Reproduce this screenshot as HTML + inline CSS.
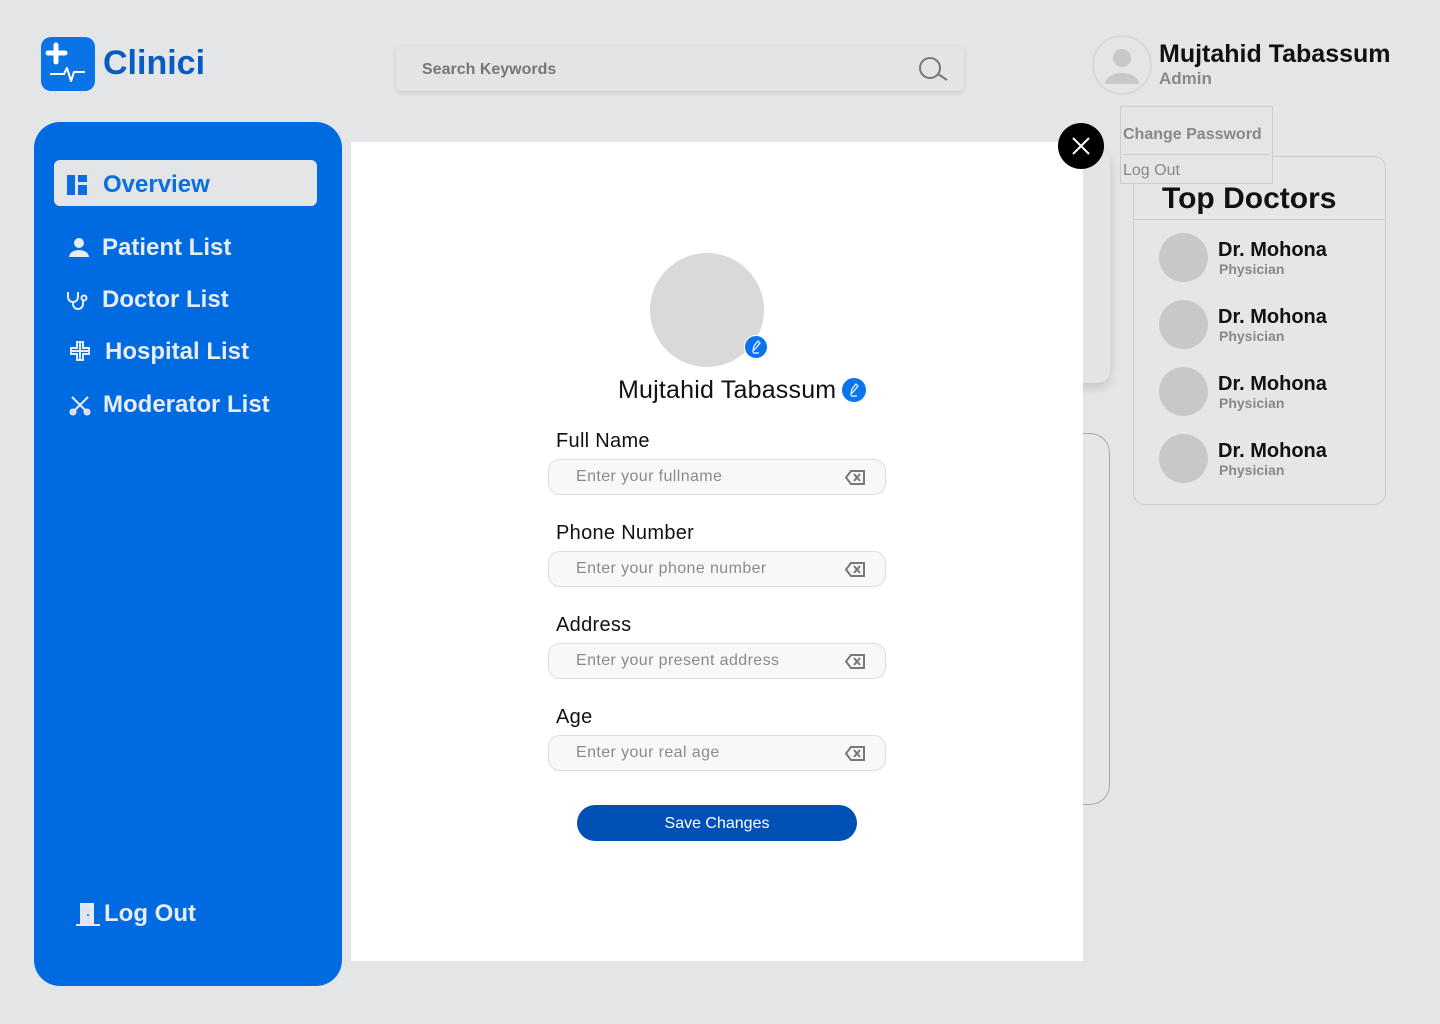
<!DOCTYPE html>
<html><head><meta charset="utf-8"><style>
*{box-sizing:border-box;margin:0;padding:0}
body{width:1440px;height:1024px;background:#e4e5e7;font-family:"Liberation Sans",sans-serif;position:relative;overflow:hidden}
.abs{position:absolute}
.side{left:34px;top:122px;width:308px;height:864px;background:#006be0;border-radius:26px}
.nav{position:absolute;left:70px;color:#e8ecf2;font-size:24px;font-weight:bold;display:flex;align-items:center;gap:12px}
.field-l{position:absolute;left:556px;font-size:20px;color:#111;letter-spacing:.3px}
.inp{position:absolute;left:548px;width:338px;height:36px;border:1px solid #ddd;border-radius:12px;background:#f8f8f8;font-size:16px;color:#8a8a8a;padding:8px 0 0 27px;letter-spacing:.4px}
.inp svg{position:absolute;right:20px;top:10px}
.doc{position:absolute;left:1159px}
.doc .c{position:absolute;left:0;top:0;width:49px;height:49px;border-radius:50%;background:#c8c8c8}
.doc .n{position:absolute;left:59px;top:6px;font-size:20px;font-weight:bold;color:#111;white-space:nowrap}
.doc .p{position:absolute;left:60px;top:28px;font-size:14px;font-weight:bold;color:#888}
</style></head><body>
<div class="abs" style="left:41px;top:37px;width:54px;height:54px;background:#0a74e6;border-radius:10px">
<svg width="54" height="54" viewBox="0 0 54 54"><path d="M15 8v17M7 16h17" stroke="#fff" stroke-width="5" stroke-linecap="round"/><path d="M9 37h14l3-6 4 13 3-9h11" stroke="#fff" stroke-width="2" fill="none" stroke-linejoin="round"/></svg></div>
<div class="abs" style="left:103px;top:44px;font-size:34px;font-weight:bold;color:#0a5bc0">Clinici</div>
<div class="abs" style="left:396px;top:46px;width:568px;height:45px;background:#e4e4e4;border-radius:4px;box-shadow:0 2px 4px rgba(0,0,0,.12)">
<span class="abs" style="left:26px;top:15px;font-size:16px;font-weight:bold;color:#777">Search Keywords</span>
<svg class="abs" style="left:522px;top:10px" width="34" height="26"><circle cx="12" cy="12" r="10" fill="none" stroke="#777" stroke-width="2"/><path d="M20 18l9 6" stroke="#777" stroke-width="2"/></svg></div>
<div class="abs" style="left:1092px;top:35px;width:60px;height:60px;border-radius:50%;border:2px solid #d8d8d8;background:#e4e5e7">
<svg width="56" height="56"><circle cx="28" cy="21" r="9" fill="#c8c8c8"/><path d="M11 47a17 11 0 0 1 34 0z" fill="#c8c8c8"/></svg></div>
<div class="abs" style="left:1159px;top:40px;font-size:25px;font-weight:bold;color:#111">Mujtahid Tabassum</div>
<div class="abs" style="left:1159px;top:69px;font-size:17px;font-weight:bold;color:#888">Admin</div>
<div class="abs" style="left:1133px;top:156px;width:253px;height:349px;border:1px solid #ccc;border-radius:12px;background:#e6e6e7"></div>
<div class="abs" style="left:1133px;top:219px;width:253px;height:1px;background:#ccc"></div>
<div class="abs" style="left:1162px;top:182px;font-size:30px;font-weight:bold;color:#111">Top Doctors</div>
<div class="doc" style="top:233px"><div class="c"></div><div class="n">Dr. Mohona</div><div class="p">Physician</div></div>
<div class="doc" style="top:300px"><div class="c"></div><div class="n">Dr. Mohona</div><div class="p">Physician</div></div>
<div class="doc" style="top:367px"><div class="c"></div><div class="n">Dr. Mohona</div><div class="p">Physician</div></div>
<div class="doc" style="top:434px"><div class="c"></div><div class="n">Dr. Mohona</div><div class="p">Physician</div></div>
<div class="abs" style="left:1120px;top:106px;width:153px;height:78px;border:1px solid #ccc;background:#e4e5e7"></div>
<div class="abs" style="left:1123px;top:154px;width:146px;height:1px;background:#ccc"></div>
<div class="abs" style="left:1123px;top:126px;font-size:16px;font-weight:bold;color:#888">Change Password</div>
<div class="abs" style="left:1123px;top:162px;font-size:16px;color:#888">Log Out</div>
<div class="abs" style="left:1000px;top:150px;width:110px;height:233px;border-radius:12px;background:#e4e4e5;box-shadow:0 4px 10px rgba(0,0,0,.15)"></div>
<div class="abs" style="left:1000px;top:433px;width:110px;height:372px;border:1px solid #aaa;border-radius:20px;background:#e6e6e7"></div>
<div class="abs side"></div>
<div class="abs" style="left:54px;top:160px;width:263px;height:46px;background:#e4e5e7;border-radius:6px"></div>
<div class="nav" style="left:67px;top:171px;color:#0a6ee0"><svg width="20" height="22"><rect x="0" y="1" width="8" height="20" fill="#0a6ee0"/><rect x="11" y="1" width="9" height="7" fill="#0a6ee0"/><rect x="11" y="11" width="9" height="10" fill="#0a6ee0"/></svg><span style="margin-left:4px">Overview</span></div>
<div class="nav" style="left:68px;top:234px"><svg width="22" height="22"><circle cx="11" cy="6" r="5" fill="#e8ecf2"/><path d="M1 20a10 7 0 0 1 20 0z" fill="#e8ecf2"/></svg><span>Patient List</span></div>
<div class="nav" style="left:66px;top:286px"><svg width="24" height="22" fill="none" stroke="#e8ecf2" stroke-width="2"><path d="M2 3v5a5 5 0 0 0 10 0V3M7 13v2a5 5 0 0 0 10 0v-3"/><circle cx="18" cy="9" r="2.5"/></svg><span>Doctor List</span></div>
<div class="nav" style="left:69px;top:338px"><svg width="24" height="24" fill="none" stroke="#e8ecf2" stroke-width="2"><path d="M8 2h6v6h6v6h-6v6H8v-6H2V8h6z"/><path d="M11 2v18M2 11h18"/></svg><span>Hospital List</span></div>
<div class="nav" style="left:69px;top:391px"><svg width="22" height="22" fill="none" stroke="#e8ecf2" stroke-width="2"><path d="M3 3l16 16M19 3L3 19"/><circle cx="4" cy="18" r="2.5"/><circle cx="18" cy="18" r="2.5"/></svg><span>Moderator List</span></div>
<div class="nav" style="left:76px;top:900px;gap:4px"><svg width="24" height="26"><rect x="4" y="2" width="14" height="22" fill="#e8ecf2"/><path d="M4 2l10 3v19H4z" fill="#dfe6ee"/><circle cx="12" cy="14" r="1" fill="#006be0"/><path d="M0 24h24" stroke="#e8ecf2" stroke-width="2"/></svg><span>Log Out</span></div>
<div class="abs" style="left:351px;top:142px;width:732px;height:819px;background:#fff"></div>
<div class="abs" style="left:1058px;top:123px;width:46px;height:46px;border-radius:50%;background:#000">
<svg width="46" height="46"><path d="M15 15l16 16M31 15L15 31" stroke="#fff" stroke-width="2"/></svg></div>
<div class="abs" style="left:650px;top:253px;width:114px;height:114px;border-radius:50%;background:#d9d9d9"></div>
<div class="abs" style="left:744px;top:335px;width:24px;height:24px;border-radius:50%;background:#0a74f0;border:1px solid #fff">
<svg width="22" height="22"><path d="M8 15l1-5 4-5 2 2-4 5zM8 17h6" stroke="#fff" stroke-width="1.2" fill="none"/></svg></div>
<div class="abs" style="left:618px;top:376px;font-size:25px;color:#111;letter-spacing:.2px">Mujtahid Tabassum</div>
<div class="abs" style="left:842px;top:378px;width:24px;height:24px;border-radius:50%;background:#0a74f0">
<svg width="24" height="24"><path d="M9 16l1-5 4-5 2 2-4 5zM9 18h6" stroke="#fff" stroke-width="1.2" fill="none"/></svg></div>
<div class="field-l" style="top:430px">Full Name</div>
<div class="inp" style="top:459px">Enter your fullname<svg width="20" height="15"><path d="M6 1h13v13H6L1 7.5z" fill="none" stroke="#777" stroke-width="2"/><path d="M9 4l6 7M15 4l-6 7" stroke="#777" stroke-width="2"/></svg></div>
<div class="field-l" style="top:522px">Phone Number</div>
<div class="inp" style="top:551px">Enter your phone number<svg width="20" height="15"><path d="M6 1h13v13H6L1 7.5z" fill="none" stroke="#777" stroke-width="2"/><path d="M9 4l6 7M15 4l-6 7" stroke="#777" stroke-width="2"/></svg></div>
<div class="field-l" style="top:614px">Address</div>
<div class="inp" style="top:643px">Enter your present address<svg width="20" height="15"><path d="M6 1h13v13H6L1 7.5z" fill="none" stroke="#777" stroke-width="2"/><path d="M9 4l6 7M15 4l-6 7" stroke="#777" stroke-width="2"/></svg></div>
<div class="field-l" style="top:706px">Age</div>
<div class="inp" style="top:735px">Enter your real age<svg width="20" height="15"><path d="M6 1h13v13H6L1 7.5z" fill="none" stroke="#777" stroke-width="2"/><path d="M9 4l6 7M15 4l-6 7" stroke="#777" stroke-width="2"/></svg></div>
<div class="abs" style="left:577px;top:805px;width:280px;height:36px;border-radius:18px;background:#0050b5;color:#fff;font-size:16px;text-align:center;line-height:37px">Save Changes</div>
</body></html>
